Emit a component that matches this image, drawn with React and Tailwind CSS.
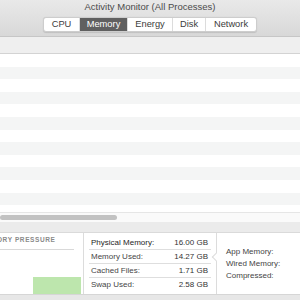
export default function App() {
  const rows = Array.from({ length: 13 });
  const segs = [
    { label: "CPU", w: "w-[35px]" },
    { label: "Memory", w: "w-[48px]", active: true },
    { label: "Energy", w: "w-[45px]" },
    { label: "Disk", w: "w-[33px]" },
    { label: "Network", w: "w-[51px]" },
  ];
  const stats = [
    ["Physical Memory:", "16.00 GB", true],
    ["Memory Used:", "14.27 GB"],
    ["Cached Files:", "1.71 GB"],
    ["Swap Used:", "2.58 GB"],
  ];
  return (
    <div className="w-[300px] h-[300px] overflow-hidden flex flex-col bg-white font-['Liberation_Sans',Arial,sans-serif]">
      {/* toolbar */}
      <div className="h-[37px] shrink-0 flex flex-col items-center bg-gradient-to-b from-[#e9e9e9] to-[#d8d8d8] border-b border-[#c6c6c6]">
        <div className="h-[14px] leading-[14px] text-[9.5px] text-[#4b4b4b]">Activity Monitor (All Processes)</div>
        <div className="mt-[3px] flex h-[15px] rounded-[3px] border border-[#cdcdcd] bg-white shadow-[0_0.5px_1px_rgba(0,0,0,0.12)] overflow-hidden">
          {segs.map((s, i) => (
            <div
              key={s.label}
              className={`${s.w} flex items-center justify-center text-[9.3px] leading-none ${i > 0 ? "border-l border-[#dcdcdc]" : ""} ${s.active ? "bg-[#606060] text-white" : "text-[#3c3c3c]"}`}
            >
              {s.label}
            </div>
          ))}
        </div>
      </div>
      {/* header */}
      <div className="h-[17px] shrink-0 bg-[#efefef] border-b border-[#d3d3d3]" />
      {/* rows */}
      <div className="flex-1 min-h-0 overflow-hidden">
        {rows.map((_, i) => (
          <div key={i} className={`h-[12.6px] ${i % 2 === 0 ? "bg-white" : "bg-[#f4f5f5]"}`} />
        ))}
      </div>
      {/* scrollbar */}
      <div className="h-[10px] shrink-0 border-t border-[#e6e6e6] bg-[#fafafa] pt-[2px]">
        <div className="w-[117px] h-[5px] rounded-full bg-[#c2c2c2]" />
      </div>
      {/* gap band */}
      <div className="h-[11px] shrink-0 bg-[#ebebeb] border-b border-[#dadada]" />
      {/* bottom panel */}
      <div className="h-[61px] shrink-0 flex bg-white">
        <div className="w-[84px] shrink-0 flex flex-col border-r border-[#dcdcdc] overflow-hidden">
          <div className="h-[14px] pt-[3px] leading-[8px] text-[6.5px] font-bold tracking-[0.6px] text-[#8a8a8a] whitespace-nowrap ml-[-20px]">
            MEMORY PRESSURE
          </div>
          <div className="mt-[2px] h-px w-[74px] bg-[#d9d9d9]" />
          <div className="flex-1" />
          <div className="ml-[33px] w-[48px] h-[17px] bg-[#bde6ad]" />
        </div>
        <div className="w-[132px] shrink-0 pl-[5px] pr-[5px] pt-[3px]">
          {stats.map(([l, v, strong], i) => (
            <div
              key={l}
              className={`h-[14px] flex items-center justify-between pl-[2px] pr-[3px] text-[8px] ${i < 3 ? "border-b border-[#dedede]" : ""}`}
            >
              <span className={strong ? "text-[#1e1e1e]" : "text-[#454545]"}>{l}</span>
              <span className="text-[#333]">{v}</span>
            </div>
          ))}
        </div>
        <div className="relative flex-1 border-l border-[#dcdcdc] pl-[9px] pt-[13px]">
          <div className="absolute left-[-4px] top-[21px] w-[6px] h-[6px] rotate-45 bg-white border-l border-b border-[#dcdcdc]" />
          {["App Memory:", "Wired Memory:", "Compressed:"].map((t) => (
            <div key={t} className="h-[12px] leading-[12px] text-[8px] text-[#444]">{t}</div>
          ))}
        </div>
      </div>
      <div className="h-[6px] shrink-0 bg-[#e7e7e7] border-t border-[#d6d6d6]" />
    </div>
  );
}
